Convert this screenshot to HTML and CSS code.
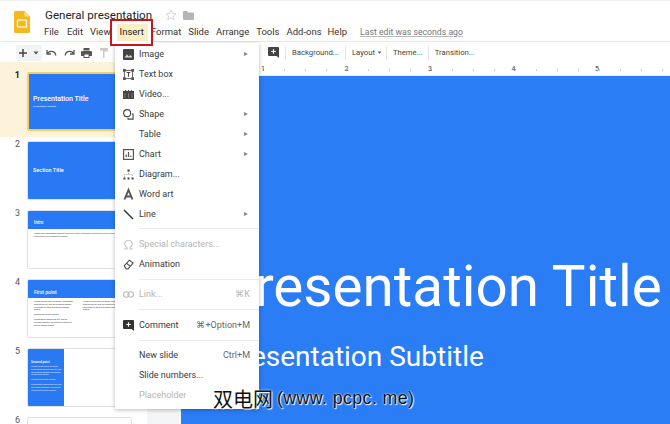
FILE: index.html
```html
<!DOCTYPE html>
<html lang="en">
<head>
<meta charset="utf-8">
<title>General presentation</title>
<link rel="stylesheet" href="styles.css">
</head>
<body>
<div class="app">
  <header class="top">
    <svg class="logo" viewBox="0 0 16 22" width="16" height="22"><path d="M1.5 0H10.5L16 5.5V20.5A1.5 1.5 0 0 1 14.500 22H1.500A1.500 1.500 0 0 1 0 20.500V1.500A1.500 1.500 0 0 1 1.500 0Z" fill="#f5b81f"/><path d="M10.500 0V5.500H16Z" fill="#fbdc83"/><rect x="3.500" y="9" width="9" height="7" rx="0.800" fill="none" stroke="#fff3cf" stroke-width="1.400"/></svg>
    <div class="doc">
      <div class="title-row">
        <span class="doc-title">General presentation</span>
        <svg class="star" viewBox="0 0 12 12" width="12" height="12"><path d="M6 1L7.500 4.500L11 4.800L8.300 7.100L9.200 10.700L6 8.800L2.800 10.700L3.700 7.100L1 4.800L4.500 4.500Z" fill="none" stroke="#d5d5d5" stroke-width="1"/></svg>
        <svg class="folder" viewBox="0 0 11 9" width="11" height="9"><path d="M0 1A1 1 0 0 1 1 0H4L5 1.500H10A1 1 0 0 1 11 2.500V8A1 1 0 0 1 10 9H1A1 1 0 0 1 0 8Z" fill="#b5b5b5"/></svg>
      </div>
      <nav class="menubar">
        <span class="m-file">File</span>
        <span class="m-edit">Edit</span>
        <span class="m-view">View</span>
        <span class="m-insert">Insert</span>
        <span class="m-format">Format</span>
        <span class="m-slide">Slide</span>
        <span class="m-arrange">Arrange</span>
        <span class="m-tools">Tools</span>
        <span class="m-addons">Add-ons</span>
        <span class="m-help">Help</span>
        <span class="m-last">Last edit was seconds ago</span>
      </nav>
    </div>
  </header>

  <div class="toolbar">
    <div class="add-group">
      <svg viewBox="0 0 10 10" width="10" height="10"><path d="M5 1V9M1 5H9" stroke="#444" stroke-width="1.500"/></svg>
      <svg viewBox="0 0 6 4" width="6" height="4"><path d="M0.500 0.500H5.500L3 3.500Z" fill="#555"/></svg>
    </div>
    <svg class="t-undo" viewBox="0 0 12 8" width="12" height="8"><path d="M2 1V5H6M2.200 5A4.500 4.500 0 0 1 10.800 6.500" fill="none" stroke="#555" stroke-width="1.300"/></svg>
    <svg class="t-redo" viewBox="0 0 12 8" width="12" height="8"><path d="M10 1V5H6M9.800 5A4.500 4.500 0 0 0 1.200 6.500" fill="none" stroke="#555" stroke-width="1.300"/></svg>
    <svg class="t-print" viewBox="0 0 11 10" width="11" height="10"><path d="M2.500 0H8.500V2.500H2.500ZM1 3H10A1 1 0 0 1 11 4V8H8.500V10H2.500V8H0V4A1 1 0 0 1 1 3ZM3.500 6.500V9H7.500V6.500Z" fill="#555" fill-rule="evenodd"/></svg>
    <svg class="t-paint" viewBox="0 0 8 10" width="8" height="10"><path d="M0 0H8V3.500H4.500V10H3V2.500H0Z" fill="#c9c9c9"/></svg>
    <div class="toolbar-right">
      <svg class="t-comment" viewBox="0 0 11 11" width="11" height="11"><path d="M0 1A1 1 0 0 1 1 0H10A1 1 0 0 1 11 1V11L8.500 9H1A1 1 0 0 1 0 8Z" fill="#444"/><path d="M5.500 2.200V6.800M3.200 4.500H7.800" stroke="#fff" stroke-width="1.200"/></svg>
      <span class="t-div"></span>
      <span class="t-btn t-bg">Background...</span>
      <span class="t-div"></span>
      <span class="t-btn t-layout">Layout <svg viewBox="0 0 6 4" width="5" height="3"><path d="M0.500 0.500H5.500L3 3.500Z" fill="#555"/></svg></span>
      <span class="t-div"></span>
      <span class="t-btn t-theme">Theme...</span>
      <span class="t-div"></span>
      <span class="t-btn t-trans">Transition...</span>
    </div>
  </div>

  <main class="main">
    <aside class="strip">
      <div class="row row-active">
        <span class="num num-active">1</span>
        <div class="thumb thumb-sel thumb-blue">
          <div class="th-title">Presentation Title</div>
          <div class="th-sub">Presentation Subtitle</div>
        </div>
      </div>
      <div class="row">
        <span class="num">2</span>
        <div class="thumb thumb-blue thumb-section">
          <div class="th-title th-title-s">Section Title</div>
        </div>
      </div>
      <div class="row">
        <span class="num">3</span>
        <div class="thumb">
          <div class="th-head">Intro</div>
          <p class="th-text">What's this presentation about? Use this slide to introduce yourself and give a high level overview of the topic you're about to explain.</p>
        </div>
      </div>
      <div class="row">
        <span class="num">4</span>
        <div class="thumb">
          <div class="th-head th-head-lg">First point</div>
          <div class="th-cols">
            <p class="th-text th-col">Lorem ipsum dolor sit amet, consectetur adipiscing elit, sed do eiusmod tempor incididunt ut labore et dolore magna aliqua.</p>
            <p class="th-text th-col">Lorem ipsum dolor sit amet, consectetur adipiscing elit, sed do eiusmod tempor incididunt ut labore et dolore magna aliqua.</p>
          </div>
          <p class="th-text th-col th-para">Ut enim ad minim veniam.</p>
          <p class="th-text th-col th-para">Consectetur adipiscing elit, sed do eiusmod tempor incididunt ut labore et dolore magna aliqua.</p>
        </div>
      </div>
      <div class="row">
        <span class="num">5</span>
        <div class="thumb">
          <div class="th-panel">
            <div class="th-panel-title">Second point</div>
            <p class="th-panel-text">Lorem ipsum dolor sit amet, consectetur adipiscing elit, sed do eiusmod tempor incididunt ut labore et dolore.</p>
            <p class="th-panel-text">Ut enim ad minim veniam.</p>
            <p class="th-panel-text">Consectetur adipiscing elit, sed do eiusmod tempor incididunt ut labore et dolore magna.</p>
          </div>
        </div>
      </div>
      <div class="row">
        <span class="num">6</span>
        <div class="thumb"></div>
      </div>
    </aside>
    <section class="stage">
      <div class="ruler">
        <span>1</span><span>2</span><span>3</span><span>4</span><span>5</span>
      </div>
      <div class="canvas">
        <div class="slide">
          <div class="slide-title">Presentation Title</div>
          <div class="slide-sub">Presentation Subtitle</div>
        </div>
      </div>
    </section>
  </main>

  <div class="insert-mark"></div>

  <div class="menu">
    <div class="item"><svg class="ic" viewBox="0 0 11 11"><path d="M0 1A1 1 0 0 1 1 0H10A1 1 0 0 1 11 1V10A1 1 0 0 1 10 11H1A1 1 0 0 1 0 10Z" fill="#444"/><path d="M1.500 8.500L4 5.500L5.800 7.500L7.300 6L9.500 8.500Z" fill="#ddd"/></svg><span class="lbl">Image</span><i class="arr"></i></div>
    <div class="item"><svg class="ic" viewBox="0 0 12 12"><rect x="1.500" y="1.500" width="9" height="9" fill="none" stroke="#555"/><path d="M0 0H3V3H0ZM9 0H12V3H9ZM0 9H3V12H0ZM9 9H12V12H9Z" fill="#555"/><path d="M4 3.800H8M6 3.800V8.500" stroke="#444" stroke-width="1.100"/></svg><span class="lbl">Text box</span></div>
    <div class="item"><svg class="ic" viewBox="0 0 11 9"><path d="M0 1H1.500L2.500 0H3.500L2.800 1H4.500L5.500 0H6.500L5.800 1H7.500L8.500 0H9.500L8.800 1H11V9H0Z" fill="#444"/><path d="M2 3V8M5.500 3V8M9 3V8" stroke="#888" stroke-width="0.800"/></svg><span class="lbl">Video...</span></div>
    <div class="item"><svg class="ic" viewBox="0 0 12 12"><circle cx="4.500" cy="4.500" r="3.800" fill="none" stroke="#444" stroke-width="1.200"/><path d="M9.500 5.500H11V11H5.500V9.500" fill="none" stroke="#444" stroke-width="1.200"/></svg><span class="lbl">Shape</span><i class="arr"></i></div>
    <div class="item"><span class="ic"></span><span class="lbl">Table</span><i class="arr"></i></div>
    <div class="item"><svg class="ic" viewBox="0 0 11 11"><rect x="0.600" y="0.600" width="9.800" height="9.800" fill="none" stroke="#555" stroke-width="1.200"/><path d="M3.200 8V5.500M5.500 8V3M7.800 8V6.500" stroke="#555" stroke-width="1.200"/></svg><span class="lbl">Chart</span><i class="arr"></i></div>
    <div class="item"><svg class="ic" viewBox="0 0 12 11"><path d="M6 2V5M1.500 8V5.500H10.500V8" fill="none" stroke="#666" stroke-width="0.700" stroke-dasharray="1 1"/><path d="M4.800 0H7.200V2.200H4.800ZM0.500 8.800H2.700V11H0.500ZM4.900 8.800H7.100V11H4.900ZM9.300 8.800H11.500V11H9.300Z" fill="#444"/></svg><span class="lbl">Diagram...</span></div>
    <div class="item"><svg class="ic" viewBox="0 0 11 11"><path d="M1.500 10.500L5.500 1L9.500 10.500M3.200 7.500H7.800" fill="none" stroke="#555" stroke-width="1.900"/></svg><span class="lbl">Word art</span></div>
    <div class="item"><svg class="ic" viewBox="0 0 11 11"><path d="M1 1L10 10" stroke="#333" stroke-width="1.400"/></svg><span class="lbl">Line</span><i class="arr"></i></div>
    <div class="sep sep-a"></div>
    <div class="item off"><svg class="ic" viewBox="0 0 11 11"><path d="M1 10H4V8.500A3.800 3.800 0 1 1 7 8.500V10H10" fill="none" stroke="#c4c4c4" stroke-width="1.100"/></svg><span class="lbl">Special characters...</span></div>
    <div class="item"><svg class="ic" viewBox="0 0 12 12"><path d="M1.200 7.500L7 1.200L11 4.500L5.500 10.800H3.500Z M4 4.800L8 8" fill="none" stroke="#444" stroke-width="1.100"/></svg><span class="lbl">Animation</span></div>
    <div class="sep sep-b"></div>
    <div class="item off"><svg class="ic" viewBox="0 0 12 7"><rect x="0.600" y="0.600" width="6" height="5.800" rx="2.900" fill="none" stroke="#bbb" stroke-width="1.100"/><rect x="5.400" y="0.600" width="6" height="5.800" rx="2.900" fill="none" stroke="#bbb" stroke-width="1.100"/></svg><span class="lbl">Link...</span><span class="key">⌘K</span></div>
    <div class="sep sep-c"></div>
    <div class="item"><svg class="ic" viewBox="0 0 11 11"><path d="M0 1A1 1 0 0 1 1 0H10A1 1 0 0 1 11 1V11L8.500 9H1A1 1 0 0 1 0 8Z" fill="#333"/><path d="M5.500 2.200V6.800M3.200 4.500H7.800" stroke="#fff" stroke-width="1.200"/></svg><span class="lbl">Comment</span><span class="key">⌘+Option+M</span></div>
    <div class="sep sep-d"></div>
    <div class="item"><span class="ic"></span><span class="lbl">New slide</span><span class="key">Ctrl+M</span></div>
    <div class="item"><span class="ic"></span><span class="lbl">Slide numbers...</span></div>
    <div class="item off"><span class="ic"></span><span class="lbl">Placeholder</span></div>
  </div>

  <div class="watermark"><span class="wm-cjk">双电网</span><span class="wm-latin">(www. pcpc. me)</span></div>
</div>
</body>
</html>
```
FILE: styles.css
```css
* { box-sizing: border-box; }
html, body { margin: 0; padding: 0; }
body { font-family: Roboto, "Noto Sans", sans-serif; color: #3c3c3c; background: #fff; }
.app { position: relative; width: 670px; height: 424px; overflow: hidden; display: flex; flex-direction: column; }

.top { height: 41px; display: flex; padding: 10px 0 0 14px; background: #fff; flex: none; border-top: 1px solid #f0f0f0; }
.logo { flex: none; }
.doc { margin-left: 15px; margin-top: -4px; }
.title-row { display: flex; align-items: center; height: 16px; }
.doc-title { font-size: 11.600px; color: #222; }
.star { margin-left: 13px; }
.folder { margin-left: 6px; }
.menubar { display: flex; position: relative; z-index: 1; font-size: 9.500px; color: #333; margin: 2px 0 0 -1px; line-height: 14px; white-space: nowrap; }
.m-edit { margin-left: 8px; }
.m-view { margin-left: 7px; }
.m-insert { margin-left: 9px; position: relative; z-index: 2; color: #222; }
.m-insert::before { content: ""; position: absolute; left: -3px; right: -4px; top: -5px; bottom: -3px; background: #fcefc7; z-index: -1; }
.m-format { margin-left: 7px; }
.m-slide { margin-left: 7px; }
.m-arrange { margin-left: 7px; }
.m-tools { margin-left: 7px; }
.m-addons { margin-left: 7px; }
.m-help { margin-left: 6px; }
.m-last { margin-left: 13px; font-size: 8.700px; color: #777; text-decoration: underline; text-decoration-color: #bbb; }

.toolbar { height: 21px; flex: none; display: flex; align-items: center; border-top: 1px solid #e6e6e6; padding: 1px 0 0 16px; background: #fff; }
.toolbar > svg { flex: none; }
.add-group { width: 26px; height: 16px; background: #f1f3f4; border-radius: 2px; display: flex; align-items: center; gap: 5px; padding-left: 2px; }
.t-undo { margin-left: 3px; }
.t-redo { margin-left: 7px; }
.t-print { margin-left: 5px; }
.t-paint { margin-left: 8px; }
.toolbar-right { display: flex; align-items: center; margin-left: 160px; font-size: 7.700px; color: #444; white-space: nowrap; }
.t-div { width: 1px; height: 14px; background: #e4e4e4; margin: 0 6px; }
.t-btn { display: inline-flex; align-items: center; gap: 2px; }
.t-layout { margin-right: -2px; }
.t-theme { margin-right: -1px; }

.main { flex: 1; display: flex; min-height: 0; }
.strip { width: 147px; flex: none; background: #fff; overflow: hidden; }
.row { display: flex; height: 69px; padding-top: 4px; }
.row-active { height: 75px; padding-top: 10px; background: linear-gradient(#fdf3da, #fdf3da) 0 0 / 115px 100% no-repeat; }
.num { width: 27px; padding-right: 7px; text-align: right; font-size: 9px; color: #555; line-height: 12px; flex: none; margin-top: -3px; }
.num-active { color: #222; font-weight: 700; }
.thumb { width: 105px; height: 59px; flex: none; border: 1px solid #dfe1e5; border-radius: 2px; background: #fff; overflow: hidden; }
.thumb-blue { background: #2979f5; color: #fff; display: flex; flex-direction: column; justify-content: center; padding-left: 5px; border-color: #d5e4fa; }
.thumb-sel { border: 2px solid #f3cf6c; padding-left: 4px; padding-top: 2px; }
.th-title { font-size: 7px; font-weight: 500; line-height: 9px; }
.th-title-s { font-size: 5.500px; }
.th-sub { font-size: 2.500px; line-height: 6px; }
.th-head { height: 18px; background: #2979f5; color: #fff; font-size: 4.500px; font-weight: 500; padding: 9px 0 0 6px; line-height: 6px; }
.th-head-lg { font-size: 5px; }
.th-text { margin: 3px 0 0 6px; width: 94px; font-size: 2.200px; line-height: 3px; color: #333; }
.th-cols { display: flex; gap: 3px; }
.th-col { width: 40px; flex: none; line-height: 2.800px; }
.th-para { margin-top: 2px; }
.th-panel { width: 36px; height: 100%; background: #2979f5; color: #fff; padding: 11px 2px 0 3px; }
.th-panel-title { font-size: 3.200px; font-weight: 500; line-height: 4px; }
.th-panel-text { margin: 2px 0 0; font-size: 2.200px; line-height: 2.800px; color: #eef4ff; }

.stage { flex: 1; display: flex; flex-direction: column; min-width: 0; background: #f4f5f6; }
.ruler { height: 14px; flex: none; background-color: #fff; border-bottom: 1px solid #ececec; display: flex; font-size: 7px; line-height: 15px; color: #444; padding-left: 114px; background-image: linear-gradient(90deg, #d0d0d0 1px, transparent 1px); background-size: 21px 2px; background-position: 116px 7px; background-repeat: repeat-x; }
.ruler span { width: 83.500px; flex: none; }
.canvas { flex: 1; padding-left: 34px; min-height: 0; }
.slide { height: 100%; background: #2b7df6; color: #fff; padding: 0 0 0 38px; overflow: hidden; white-space: nowrap; }
.slide-title { font-size: 56.600px; line-height: 60px; margin-top: 181px; }
.slide-sub { font-size: 28px; line-height: 32px; margin-top: 24px; padding-left: 5px; }

.insert-mark { position: absolute; left: 110px; top: 19px; width: 43px; height: 27px; border: 2px solid #c6161c; box-shadow: inset 0 0 0 3px #fff; z-index: 4; }

.menu { position: absolute; left: 115px; top: 43px; width: 144px; height: 366px; padding-top: 1px; background: #fff; box-shadow: 0 1px 4px rgba(0,0,0,.28); font-size: 9px; color: #3a3a3a; z-index: 3; }
.item { display: flex; align-items: center; height: 20px; padding-right: 9px; white-space: nowrap; }
.ic { width: 11px; height: 11px; flex: none; margin: 0 5px 0 8px; display: block; overflow: visible; }
.lbl { flex: 1; }
.arr { width: 0; height: 0; border-left: 4px solid #888; border-top: 2.500px solid transparent; border-bottom: 2.500px solid transparent; margin-right: 2px; }
.key { color: #666; }
.off, .off .key { color: #b4b4b4; }
.sep { height: 1px; background: #ebebeb; margin-left: 24px; }
.sep-a { margin-top: 4px; margin-bottom: 5px; }
.sep-b { margin-top: 5px; margin-bottom: 4px; }
.sep-c { margin-top: 5px; margin-bottom: 5px; }
.sep-d { margin-top: 5px; margin-bottom: 4px; }

.watermark { position: absolute; left: 213px; top: 385px; display: flex; align-items: center; height: 26px; color: #111; white-space: nowrap; text-shadow: 0 0 2px #fff, 1px 1px 1px #fff; z-index: 4; }
.wm-cjk { font-family: "Noto Sans CJK SC", sans-serif; font-size: 20px; }
.wm-latin { font-family: "Liberation Sans", sans-serif; font-size: 17.800px; margin-left: 4px; letter-spacing: 0.400px; }
```
